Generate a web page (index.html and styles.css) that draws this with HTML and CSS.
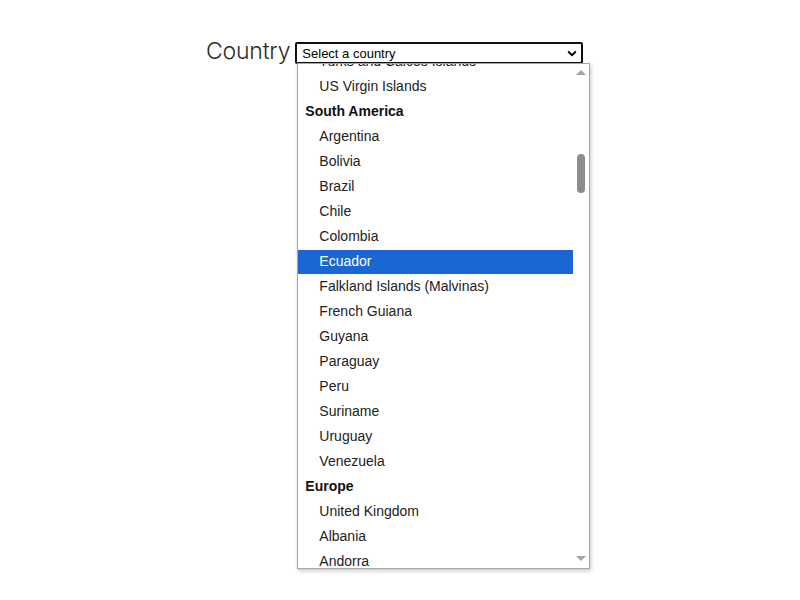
FILE: index.html
```html
<!DOCTYPE html>
<html lang="en">
<head>
<meta charset="utf-8">
<title>Country</title>
<link rel="stylesheet" href="styles.css">
</head>
<body>
<div class="page">
  <div class="field">
    <span class="label">Country</span>
    <div class="picker">
      <div class="picker-box">
        <span class="picker-text">Select a country</span>
        <svg class="chevron" width="10" height="7" viewBox="0 0 10 7"><polyline points="1.2,1.5 5,5.2 8.8,1.5" fill="none" stroke="#000" stroke-width="1.8"/></svg>
      </div>
      <div class="country-panel">
        <div class="panel-list">
          <div class="rows">
            <div class="row opt">Turks and Caicos Islands</div>
            <div class="row opt">US Virgin Islands</div>
            <div class="row grp">South America</div>
            <div class="row opt">Argentina</div>
            <div class="row opt">Bolivia</div>
            <div class="row opt">Brazil</div>
            <div class="row opt">Chile</div>
            <div class="row opt">Colombia</div>
            <div class="row opt current">Ecuador</div>
            <div class="row opt">Falkland Islands (Malvinas)</div>
            <div class="row opt">French Guiana</div>
            <div class="row opt">Guyana</div>
            <div class="row opt">Paraguay</div>
            <div class="row opt">Peru</div>
            <div class="row opt">Suriname</div>
            <div class="row opt">Uruguay</div>
            <div class="row opt">Venezuela</div>
            <div class="row grp">Europe</div>
            <div class="row opt">United Kingdom</div>
            <div class="row opt">Albania</div>
            <div class="row opt">Andorra</div>
          </div>
        </div>
        <div class="bar">
          <span class="tri tri-up"></span>
          <div class="bar-track"><span class="bar-thumb"></span></div>
          <span class="tri tri-down"></span>
        </div>
      </div>
    </div>
  </div>
</div>
</body>
</html>
```
FILE: styles.css
```css
html, body {
  margin: 0;
  padding: 0;
  background: #ffffff;
  min-height: 100vh;
}
.page {
  box-sizing: border-box;
  min-height: 600px;
  padding: 38px 0 0 206px;
}
.field {
  display: flex;
  align-items: flex-start;
  gap: 5px;
}
.label {
  font-family: Inter, "Liberation Sans", sans-serif;
  font-weight: 300;
  font-size: 23px;
  line-height: 26px;
  color: #2b2b2b;
  letter-spacing: -0.2px;
}
.picker {
  position: relative;
  margin-top: 4px;
}
.picker-box {
  box-sizing: border-box;
  width: 288px;
  height: 22px;
  border: 2px solid #101010;
  border-radius: 2px;
  display: flex;
  align-items: center;
  justify-content: space-between;
  padding: 0 3px 0 5px;
  font-family: "Liberation Sans", Arial, sans-serif;
  font-size: 13px;
  color: #000;
}
.picker-text {
  line-height: 18px;
  margin-top: 1px;
}
.chevron {
  display: block;
  margin-right: 1px;
}
.country-panel {
  position: absolute;
  z-index: 5;
  top: 21px;
  left: 2px;
  width: 293px;
  height: 506px;
  box-sizing: border-box;
  border: 1px solid #a6a6a6;
  background: #fff;
  box-shadow: 1px 2px 4px rgba(0, 0, 0, 0.22);
  display: flex;
}
.panel-list {
  flex: 1;
  overflow: hidden;
}
.rows {
  margin-top: -14px;
  font-family: "Liberation Sans", Arial, sans-serif;
  font-size: 14px;
  color: #222;
}
.row {
  height: 24px;
  line-height: 23px;
  margin-bottom: 1px;
  white-space: nowrap;
}
.opt {
  padding-left: 21px;
}
.grp {
  padding-left: 7px;
  font-weight: bold;
  color: #111;
}
.opt.current {
  background: #1a66d2;
  color: #fff;
}
.bar {
  width: 16px;
  display: flex;
  flex-direction: column;
  align-items: center;
  background: #fff;
}
.tri {
  display: block;
  width: 0;
  height: 0;
  border-left: 5px solid transparent;
  border-right: 5px solid transparent;
}
.tri-up {
  margin-top: 6px;
  border-bottom: 5px solid #a3a3a3;
}
.tri-down {
  margin-bottom: 7px;
  border-top: 5px solid #a3a3a3;
}
.bar-track {
  flex: 1;
  width: 100%;
  display: flex;
  justify-content: center;
}
.bar-thumb {
  display: block;
  width: 8px;
  height: 39px;
  margin-top: 79px;
  border-radius: 4px;
  background: #8d8d8d;
}
```
